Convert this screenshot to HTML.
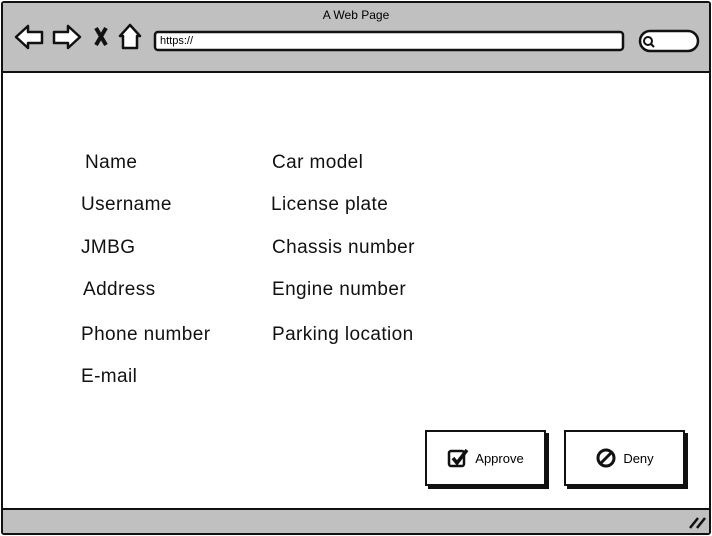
<!DOCTYPE html>
<html><head><style>
body{margin:0;width:712px;height:536px;background:#fff;font-family:"Liberation Sans",sans-serif;position:relative;overflow:hidden}
.frame{position:absolute;left:1px;top:1px;width:706px;height:530px;border:2px solid #111;border-radius:3px;background:#fff}
.top{position:absolute;left:3px;top:3px;width:706px;height:68px;background:#c0c0c0;border-bottom:2px solid #111}
.bot{position:absolute;left:3px;top:508px;width:706px;height:23px;background:#c0c0c0;border-top:2px solid #111}
.t{position:absolute;font-size:19px;letter-spacing:0.4px;color:#111;top:-1px}
.btn{position:absolute;background:#fff;border:2px solid #111;box-shadow:3px 3px 0 #111;font-size:13px;display:flex;align-items:center;justify-content:center;gap:6px}
</style></head><body>
<div class="frame"></div>
<div class="top"></div>
<div class="bot"></div>
<div style="position:absolute;left:0;top:8px;width:712px;text-align:center;font-size:12px">A Web Page</div>
<svg style="position:absolute;left:0;top:0" width="712" height="536">
<g fill="#fff" stroke="#111" stroke-width="2.5" stroke-linejoin="round">
<path d="M16 37 L28 26 L28 32 L42 32 L42 43 L28 43 L28 48 Z"/>
<path d="M80 37 L68 26 L68 32 L54 32 L54 43 L68 43 L68 48 Z"/>
<path d="M130 25 L120 36 L123 36 L123 48 L137 48 L137 36 L140 36 Z"/>
<rect x="155" y="32" width="468" height="18" rx="3"/>
<rect x="640" y="31" width="58" height="20" rx="10"/>
</g>
<path d="M96 28 L106 45 M106 28 L96 45" stroke="#111" stroke-width="4"/>
<circle cx="648" cy="41" r="4" fill="none" stroke="#111" stroke-width="2"/>
<path d="M651 44 L654 47" stroke="#111" stroke-width="2"/>
<path d="M690 528 L698 518 M697 528 L705 518" stroke="#111" stroke-width="2.5"/>
</svg>
<div style="position:absolute;left:160px;top:35px;font-size:11px">https://</div>
<div class="t" style="left:85px;margin-top:153px">Name</div>
<div class="t" style="left:81px;margin-top:195px">Username</div>
<div class="t" style="left:81px;margin-top:238px">JMBG</div>
<div class="t" style="left:83px;margin-top:280px">Address</div>
<div class="t" style="left:81px;margin-top:325px">Phone number</div>
<div class="t" style="left:81px;margin-top:367px">E-mail</div>
<div class="t" style="left:272px;margin-top:153px">Car model</div>
<div class="t" style="left:271px;margin-top:195px">License plate</div>
<div class="t" style="left:272px;margin-top:238px">Chassis number</div>
<div class="t" style="left:272px;margin-top:280px">Engine number</div>
<div class="t" style="left:272px;margin-top:325px">Parking location</div>
<div class="btn" style="left:425px;top:430px;width:117px;height:52px">
<svg width="22" height="22"><rect x="2" y="4" width="15" height="15" rx="2" fill="none" stroke="#111" stroke-width="2.5"/><path d="M6 11 L10 16 L20 3" fill="none" stroke="#111" stroke-width="3.5"/></svg>Approve</div>
<div class="btn" style="left:564px;top:430px;width:117px;height:52px">
<svg width="22" height="22"><circle cx="11" cy="11" r="8" fill="none" stroke="#111" stroke-width="3"/><path d="M6 16 L16 6" stroke="#111" stroke-width="3"/></svg>Deny</div>
</body></html>
